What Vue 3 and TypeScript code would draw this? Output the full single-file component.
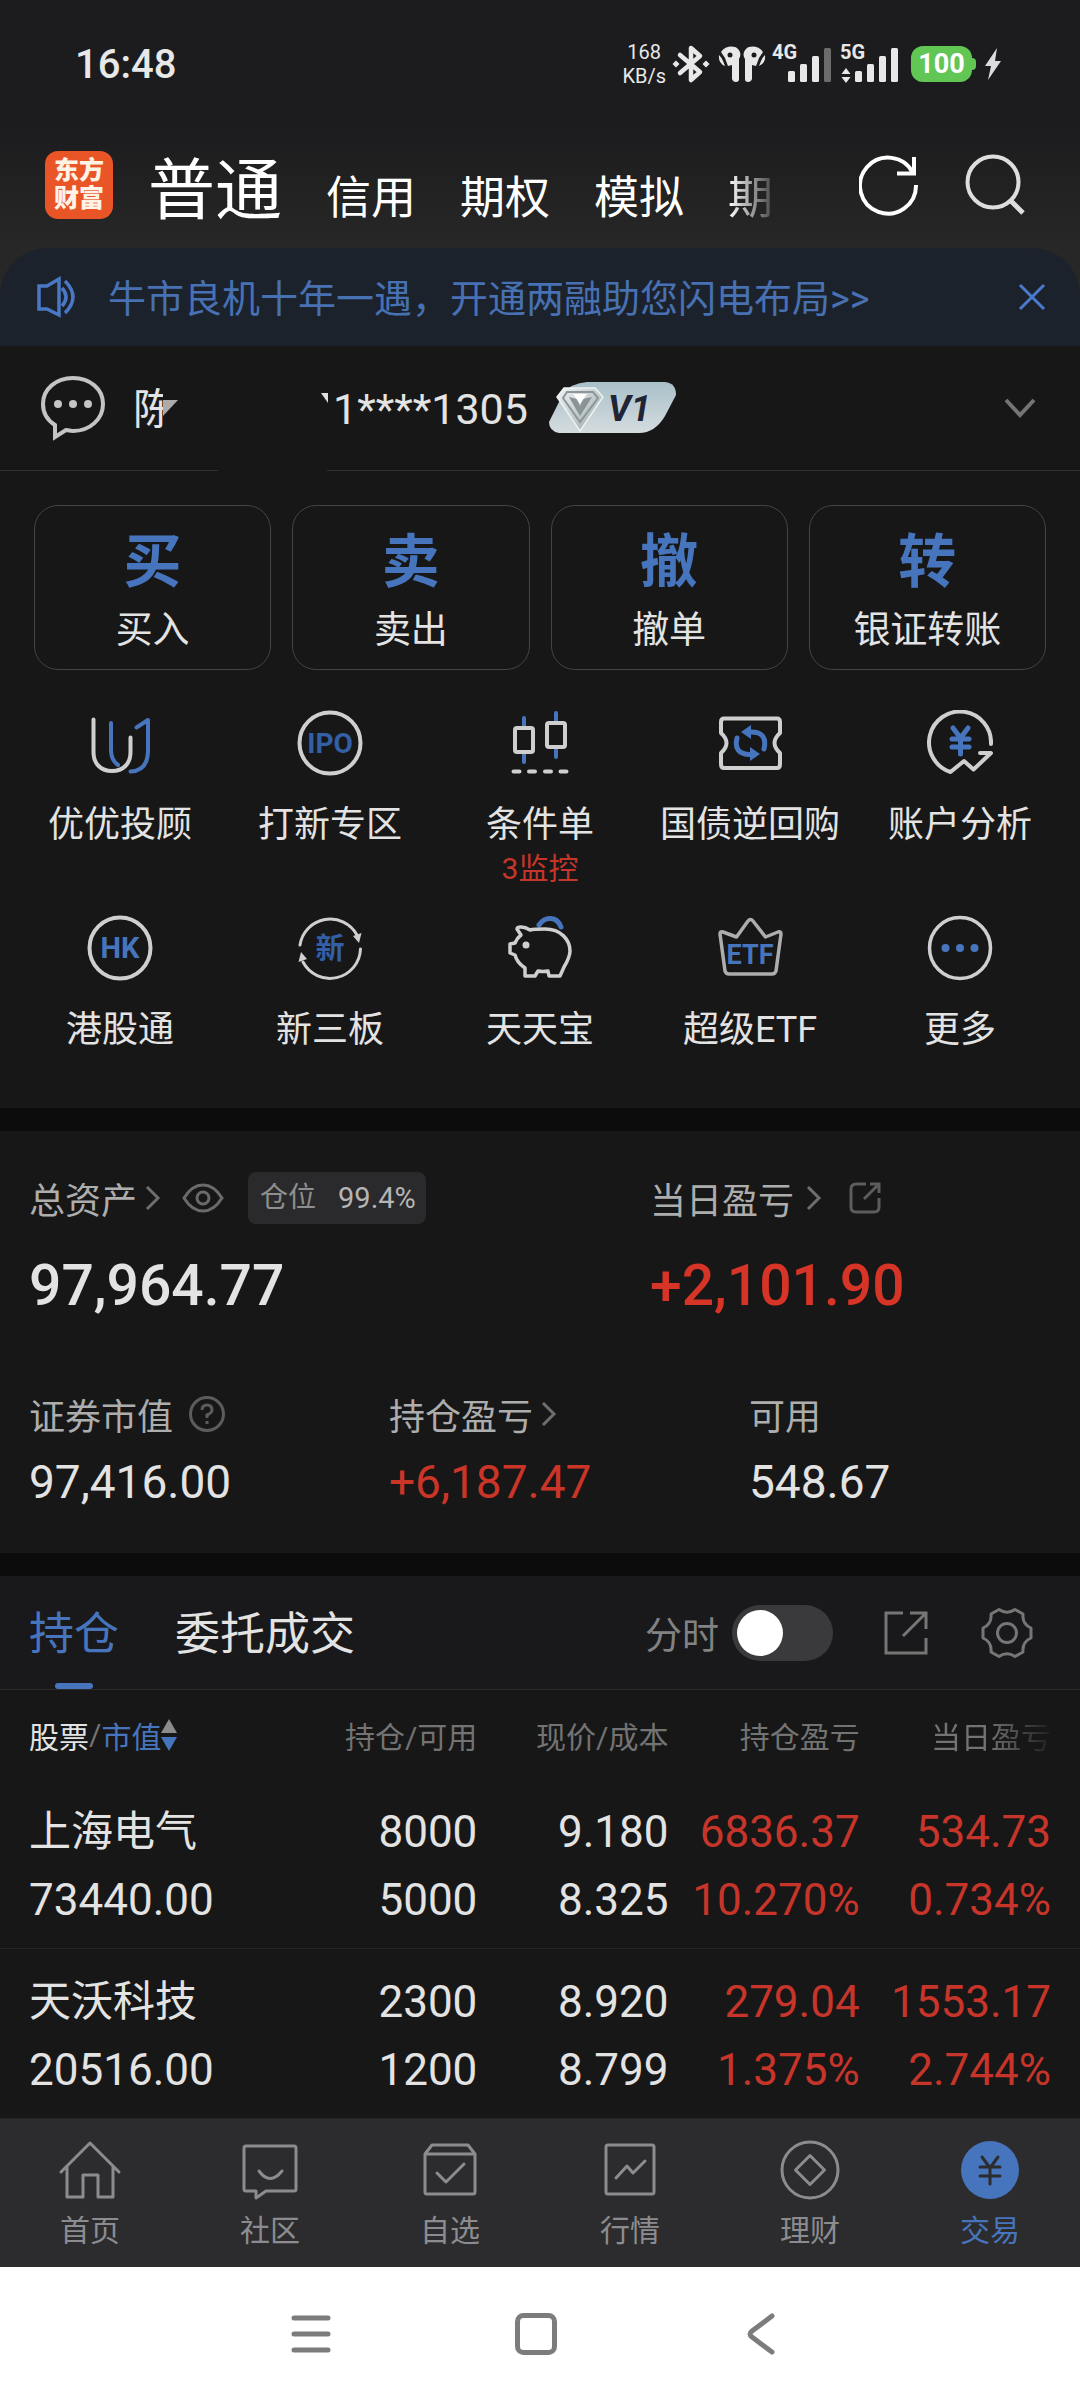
<script setup lang="ts">
import { ref } from 'vue'

interface Feature {
  icon: string
  label: string
  note?: string
}

interface Holding {
  name: string
  marketValue: string
  held: string
  available: string
  price: string
  cost: string
  profit: string
  profitRate: string
  dayProfit: string
  dayRate: string
}

const accountTypes = ['信用', '期权', '模拟']

const actions = [
  { mark: '买', label: '买入' },
  { mark: '卖', label: '卖出' },
  { mark: '撤', label: '撤单' },
  { mark: '转', label: '银证转账' },
]

const features: Feature[] = [
  { icon: 'advisor', label: '优优投顾' },
  { icon: 'ipo', label: '打新专区' },
  { icon: 'candles', label: '条件单', note: '3监控' },
  { icon: 'bond', label: '国债逆回购' },
  { icon: 'analysis', label: '账户分析' },
  { icon: 'hk', label: '港股通' },
  { icon: 'board', label: '新三板' },
  { icon: 'pig', label: '天天宝' },
  { icon: 'etf', label: '超级ETF' },
  { icon: 'more', label: '更多' },
]

const holdings: Holding[] = [
  {
    name: '上海电气',
    marketValue: '73440.00',
    held: '8000',
    available: '5000',
    price: '9.180',
    cost: '8.325',
    profit: '6836.37',
    profitRate: '10.270%',
    dayProfit: '534.73',
    dayRate: '0.734%',
  },
  {
    name: '天沃科技',
    marketValue: '20516.00',
    held: '2300',
    available: '1200',
    price: '8.920',
    cost: '8.799',
    profit: '279.04',
    profitRate: '1.375%',
    dayProfit: '1553.17',
    dayRate: '2.744%',
  },
]

const navItems = [
  { icon: 'home', label: '首页' },
  { icon: 'community', label: '社区' },
  { icon: 'watchlist', label: '自选' },
  { icon: 'market', label: '行情' },
  { icon: 'wealth', label: '理财' },
  { icon: 'trade', label: '交易' },
]

const activeNav = 'trade'
const showIntraday = ref(false)
const bannerOpen = ref(true)
</script>

<template>
  <div class="app">
    <header class="top">
      <div class="status">
        <span class="clock">16:48</span>
        <div class="status-icons">
          <span class="speed">168<br />KB/s</span>
          <svg class="bluetooth" width="38" height="42" viewBox="0 0 38 42" aria-hidden="true">
            <path d="M8 12 28 29 19 37V5L28 13 8 30" fill="none" stroke="#e8e8e8" stroke-width="4.5" stroke-linejoin="round" stroke-linecap="round" />
            <path d="M4 17.500 7.500 21 4 24.500.5 21ZM34 17.500 37.500 21 34 24.500 30.500 21Z" fill="#e8e8e8" />
          </svg>
          <svg class="earbuds" width="48" height="38" viewBox="0 0 48 38" aria-hidden="true">
            <g fill="#e8e8e8">
              <path d="M3 7C7 1 16 0 20 4 23 7 23 11 21 14V34Q21 37 18 37T14 34V20L10 21Q8 16 7 13 5 10 3 7Z" />
              <path d="M45 7C41 1 32 0 28 4 25 7 25 11 27 14V34Q27 37 30 37T34 34V20L38 21Q40 16 41 13 43 10 45 7Z" />
              <path d="M1 10Q0 18 7 21L5 16Q4 13 1 10ZM47 10Q48 18 41 21L43 16Q44 13 47 10Z" />
            </g>
            <circle cx="12" cy="10" r="2.500" fill="#1c1c1e" />
            <circle cx="36" cy="10" r="2.500" fill="#1c1c1e" />
          </svg>
          <svg class="signal" width="60" height="50" viewBox="0 -4 60 50" aria-hidden="true">
            <text x="0" y="16" class="net">4G</text>
            <g fill="#e8e8e8">
              <rect x="16" y="28" width="7" height="11" rx="1.500" />
              <rect x="28" y="21" width="7" height="18" rx="1.500" />
              <rect x="40" y="13" width="7" height="26" rx="1.500" />
            </g>
            <rect x="52" y="5" width="7" height="34" rx="1.500" fill="#6b6b6b" />
          </svg>
          <svg class="signal second" width="60" height="50" viewBox="0 -4 60 50" aria-hidden="true">
            <text x="0" y="16" class="net">5G</text>
            <path d="M1.500 31 6 25 10.500 31ZM1.500 34H10.500L6 40Z" fill="#e8e8e8" />
            <g fill="#e8e8e8">
              <rect x="15" y="28" width="7" height="11" rx="1.500" />
              <rect x="27" y="21" width="7" height="18" rx="1.500" />
              <rect x="39" y="13" width="7" height="26" rx="1.500" />
              <rect x="51" y="5" width="7" height="34" rx="1.500" />
            </g>
          </svg>
          <span class="battery">100</span>
          <svg class="bolt" width="18" height="34" viewBox="0 0 18 34" aria-hidden="true">
            <path d="M13 1 1 19H7L4 33 17 14H11Z" fill="#dcdcdc" />
          </svg>
        </div>
      </div>

      <div class="title-row">
        <span class="logo">东方<br />财富</span>
        <nav class="types" aria-label="账户类型">
          <button type="button" class="type current">普通</button>
          <button v-for="t in accountTypes" :key="t" type="button" class="type">{{ t }}</button>
          <button type="button" class="type faded">期货</button>
        </nav>
        <button type="button" class="icon-btn" aria-label="刷新">
          <svg width="60" height="64" viewBox="0 0 60 64" fill="none" stroke="#fff" stroke-width="4">
            <path d="M57 32A28 28 0 1 1 54 20" />
            <path d="M38 20.500H55V4" />
          </svg>
        </button>
        <button type="button" class="icon-btn" aria-label="搜索">
          <svg width="60" height="64" viewBox="0 0 60 64" fill="none" stroke="#dedede" stroke-width="4">
            <circle cx="28" cy="29" r="25.500" />
            <path d="M45 47 58 60" stroke-width="5" />
          </svg>
        </button>
      </div>
    </header>

    <div class="banner-wrap">
      <div v-if="bannerOpen" class="banner">
        <svg width="42" height="44" viewBox="0 0 42 44" fill="none" stroke="#4a78c4" stroke-width="3.500" aria-hidden="true">
          <path d="M3 11H11L23 4V40L11 34H3Z" />
          <path d="M26 13Q34 22 26 31M29 6Q45 22 29 38" />
        </svg>
        <a href="#" class="banner-text">牛市良机十年一遇，开通两融助您闪电布局&gt;&gt;</a>
        <button type="button" class="icon-btn" aria-label="关闭" @click="bannerOpen = false">
          <svg width="28" height="28" viewBox="0 0 28 28" fill="none" stroke="#4a7ace" stroke-width="3">
            <path d="M2 2 26 26M26 2 2 26" />
          </svg>
        </button>
      </div>
    </div>

    <section class="account">
      <svg width="64" height="66" viewBox="0 0 64 66" aria-hidden="true">
        <path d="M14 50C6 45 2 37 2 29 2 14 15 3 32 3S62 14 62 29 49 56 32 56C29 56 26 55 25 55L14 62Z" fill="none" stroke="#c4c4c4" stroke-width="4" />
        <g fill="#c4c4c4">
          <circle cx="17" cy="29" r="4" />
          <circle cx="32" cy="29" r="4" />
          <circle cx="47" cy="29" r="4" />
        </g>
      </svg>
      <div class="holder">
        <span class="surname">陈</span>
        <svg width="15" height="16" viewBox="0 0 15 16" aria-hidden="true"><path d="M0 0H15L0 16Z" fill="#ababab" /></svg>
      </div>
      <svg class="speck" width="8" height="10" viewBox="0 0 8 10" aria-hidden="true"><path d="M0 0H7V10Z" fill="#e0e0e0" /></svg>
      <span class="number">1****1305</span>
      <svg width="128" height="52" viewBox="0 0 128 52" role="img" aria-label="V1">
        <defs>
          <linearGradient id="badge" x1="0" y1="0" x2="0" y2="1">
            <stop offset="0" stop-color="#a9c0c9" />
            <stop offset="1" stop-color="#d5dcdf" />
          </linearGradient>
          <linearGradient id="gem" x1="0" y1="0" x2="1" y2="1">
            <stop offset="0" stop-color="#f1f4f4" />
            <stop offset="1" stop-color="#9aa6a8" />
          </linearGradient>
        </defs>
        <path d="M38 0H116Q127 1 127 13L116 34Q106 51 90 51H10Q0 49 0 40L14 12Q22 1 38 0Z" fill="url(#badge)" />
        <path d="M15 6H46L54 15 31 49 8 15Z" fill="url(#gem)" stroke="#eef2f2" stroke-width="1.500" />
        <path d="M18 10H44L49 16 31 40 14 16Z" fill="none" stroke="#8b979a" stroke-width="2" />
        <path d="M20 15 28 17 31 24 34 17 43 15 31 34Z" fill="#899497" />
        <path d="M24 12H38L31 22Z" fill="#fff" />
        <text x="59" y="39" class="level">V1</text>
      </svg>
      <button type="button" class="icon-btn expand" aria-label="展开账户">
        <svg width="32" height="22" viewBox="0 0 32 22" fill="none" stroke="#747474" stroke-width="4"><path d="M2 3 16 18 30 3" /></svg>
      </button>
    </section>
    <div class="divider"><i></i><i></i></div>

    <section class="actions">
      <button v-for="a in actions" :key="a.label" type="button" class="action">
        <span class="mark">{{ a.mark }}</span>
        <span class="action-label">{{ a.label }}</span>
      </button>
    </section>

    <section class="features">
      <a v-for="f in features" :key="f.label" href="#" class="feature">
        <svg width="66" height="66" viewBox="0 0 66 66" fill="none" stroke-width="4" stroke-linecap="round" stroke-linejoin="round" aria-hidden="true">
          <template v-if="f.icon === 'advisor'">
            <path class="b" d="M24 13V40Q24 50 31 55M49.500 17.500 61 10V40Q61 61 43.500 61.500" />
            <path class="w" d="M6.500 9.500V42C6.500 54 14 61 25 61S43.500 54 43.500 42V27.500" />
          </template>
          <template v-else-if="f.icon === 'ipo'">
            <circle class="w" cx="33" cy="33" r="30.500" />
            <text x="33" y="43" class="glyph" font-size="28">IPO</text>
          </template>
          <template v-else-if="f.icon === 'candles'">
            <path class="b" d="M17 8V17M17 43V52M49 3V12M49 38V47" />
            <rect class="w" x="8" y="18" width="18" height="24" rx="2" />
            <rect class="w" x="40" y="13" width="18" height="24" rx="2" />
            <path class="w" d="M6.500 61.500H12.500M22 61.500H28M38 61.500H44M53.500 61.500H59.500" />
          </template>
          <template v-else-if="f.icon === 'bond'">
            <path class="w" d="M7 8.500H60Q63 8.500 63 12V23Q52 33 63 43V54Q63 58 60 58H7Q4 58 4 54V43Q15 33 4 23V12Q4 8.500 7 8.500Z" />
            <path class="b" stroke-width="5" d="M20 28Q16 44 33 44.500M47 39Q51 22 34 22" />
            <path class="bf" d="M24 22 34 15V29ZM43 44 33 37V51Z" />
          </template>
          <template v-else-if="f.icon === 'analysis'">
            <path class="w" d="M64 34A31 31 0 1 0 23.500 62L37 51 46.500 59.500 64 43H53" />
            <path class="b" stroke-width="5" d="M26 18 33.500 28 41 18M33.500 28V44M25 29H42M25 37H42" />
          </template>
          <template v-else-if="f.icon === 'hk'">
            <circle class="w" cx="33" cy="33" r="30.500" />
            <text x="33" y="43" class="glyph light" font-size="29">HK</text>
          </template>
          <template v-else-if="f.icon === 'board'">
            <path class="w" stroke-width="3" d="M3 30A30.500 30.500 0 0 1 60 20M63.500 34A30.500 30.500 0 0 1 6 47" />
            <path class="wf" d="M4 37 1.500 47 10 44ZM62 28 64.500 18 56 21Z" />
            <text x="33" y="44" class="glyph" font-size="29">新</text>
          </template>
          <template v-else-if="f.icon === 'pig'">
            <path class="b" stroke-width="5" d="M32 10C38 1 50 1 54 12" />
            <path class="w" stroke-width="3.500" d="M14 20 10 14Q10 12 14 12C18 12 20 13 23 15 27 14 33 14 38 14 54 14 63 25 63 36 63 42 60 47 57 52L53 61H42L41 56Q36 57 31 56L28 61H18V53C12 49 9 44 8 40L3 38V29L8 28Q10 23 14 20Z" />
            <circle class="wf" cx="19" cy="30" r="3.500" />
          </template>
          <template v-else-if="f.icon === 'etf'">
            <path class="w dim" stroke-width="3.500" d="M3 19Q3 16 6 17L19.500 22 31 6Q33.500 3 36 6L48.500 22 61 17Q64 16 64 19L59 56Q58 59 55 59H12Q9 59 8 56Z" />
            <text x="33" y="49" class="glyph light" font-size="27">ETF</text>
          </template>
          <template v-else>
            <circle class="w" cx="33" cy="33" r="30.500" stroke-width="3.500" />
            <g class="bf">
              <circle cx="18.500" cy="33" r="4" />
              <circle cx="33" cy="33" r="4" />
              <circle cx="47.500" cy="33" r="4" />
            </g>
          </template>
        </svg>
        <span class="feature-label">{{ f.label }}</span>
        <span v-if="f.note" class="feature-note">{{ f.note }}</span>
      </a>
    </section>

    <section class="assets">
      <div class="row primary">
        <div class="cell">
          <div class="cap">
            <span>总资产</span>
            <svg class="chev" width="16" height="26" viewBox="0 0 16 26"><path d="M2 2 13 13 2 24" /></svg>
            <button type="button" class="icon-btn eye" aria-label="隐藏金额">
              <svg width="42" height="30" viewBox="0 0 42 30" fill="none" stroke="#6a6a6a" stroke-width="3">
                <path d="M2 15Q10 2 21 2T40 15Q32 28 21 28T2 15Z" />
                <circle cx="21" cy="15" r="6" />
              </svg>
            </button>
            <span class="tag"><span>仓位</span><b>99.4%</b></span>
          </div>
          <div class="big">97,964.77</div>
        </div>
        <div class="cell">
          <div class="cap">
            <span>当日盈亏</span>
            <svg class="chev day" width="16" height="26" viewBox="0 0 16 26"><path d="M2 2 13 13 2 24" /></svg>
            <button type="button" class="icon-btn share" aria-label="分享当日盈亏">
              <svg width="34" height="34" viewBox="0 0 34 34" fill="none" stroke="#5c5c5c" stroke-width="3">
                <path d="M18 3H8Q3 3 3 8V26Q3 31 8 31H26Q31 31 31 26V17M22 3H31V12M31 3 16 18" />
              </svg>
            </button>
          </div>
          <div class="big up">+2,101.90</div>
        </div>
      </div>
      <div class="row secondary">
        <div class="cell">
          <div class="cap">
            <span>证券市值</span>
            <button type="button" class="icon-btn help" aria-label="说明">
              <svg width="38" height="38" viewBox="0 0 38 38" fill="none" stroke="#5c5c5c" stroke-width="3">
                <circle cx="19" cy="19" r="16.500" />
                <path d="M14 15Q14 10 19 10T24 15Q24 18 19 20V23M19 26V29" />
              </svg>
            </button>
          </div>
          <div class="mid">97,416.00</div>
        </div>
        <div class="cell">
          <div class="cap">
            <span>持仓盈亏</span>
            <svg class="chev" width="16" height="26" viewBox="0 0 16 26"><path d="M2 2 13 13 2 24" /></svg>
          </div>
          <div class="mid up">+6,187.47</div>
        </div>
        <div class="cell">
          <div class="cap"><span>可用</span></div>
          <div class="mid">548.67</div>
        </div>
      </div>
    </section>

    <section class="positions">
      <div class="tabs">
        <button type="button" class="tab on">持仓</button>
        <button type="button" class="tab">委托成交</button>
        <label class="switch-label" for="intraday">分时</label>
        <input id="intraday" v-model="showIntraday" type="checkbox" class="switch" />
        <button type="button" class="icon-btn export" aria-label="导出">
          <svg width="46" height="46" viewBox="0 0 46 46" fill="none" stroke="#767676" stroke-width="3">
            <path d="M20 3H3V43H43V28M27 3H43V19M43 3 20 26" />
          </svg>
        </button>
        <button type="button" class="icon-btn" aria-label="设置">
          <svg width="52" height="52" viewBox="0 0 52 52" fill="none" stroke="#767676" stroke-width="3" stroke-linejoin="round">
            <path d="M18 2.500Q26 8 34 2.500L42 7Q41 17 50 21V31Q41 35 42 45L34 49.500Q26 44 18 49.500L10 45Q11 35 2 31V21Q11 17 10 7Z" />
            <circle cx="26" cy="26" r="9.500" />
          </svg>
        </button>
      </div>

      <table class="holdings">
        <colgroup>
          <col class="c-name" />
          <col class="c-num" />
          <col class="c-num" />
          <col class="c-num" />
          <col />
        </colgroup>
        <thead>
          <tr>
            <th scope="col">
              <button type="button" class="sort">
                <span class="lead">股票</span><span class="slash">/</span><span>市值</span>
                <svg width="16" height="32" viewBox="0 0 16 32" aria-hidden="true">
                  <path d="M8 0 16 14H0Z" fill="#8c8c8c" />
                  <path d="M8 32 16 18H0Z" fill="#4775bd" />
                </svg>
              </button>
            </th>
            <th scope="col">持仓/可用</th>
            <th scope="col">现价/成本</th>
            <th scope="col">持仓盈亏</th>
            <th scope="col" class="fade">当日盈亏</th>
          </tr>
        </thead>
        <tbody>
          <tr v-for="h in holdings" :key="h.name">
            <td><span class="stock">{{ h.name }}</span><span>{{ h.marketValue }}</span></td>
            <td><span>{{ h.held }}</span><span>{{ h.available }}</span></td>
            <td><span>{{ h.price }}</span><span>{{ h.cost }}</span></td>
            <td class="red"><span>{{ h.profit }}</span><span>{{ h.profitRate }}</span></td>
            <td class="red"><span>{{ h.dayProfit }}</span><span>{{ h.dayRate }}</span></td>
          </tr>
        </tbody>
      </table>
    </section>

    <nav class="bottom" aria-label="主导航">
      <a v-for="n in navItems" :key="n.icon" href="#" class="nav-item" :class="{ active: n.icon === activeNav }">
        <svg width="64" height="64" viewBox="0 0 64 64" fill="none" stroke="currentColor" stroke-width="3" stroke-linejoin="round" stroke-linecap="round" aria-hidden="true">
          <path v-if="n.icon === 'home'" d="M3 34 32 5 61 34M9 29V59H25V37H40V59H55V29" />
          <template v-else-if="n.icon === 'community'">
            <path d="M8 8H56Q58 8 58 10V51Q58 53 56 53H28L18 60V53H8Q6 53 6 51V10Q6 8 8 8Z" />
            <path d="M21 33Q32 48 44 33" />
          </template>
          <template v-else-if="n.icon === 'watchlist'">
            <path d="M7 16 14 7H50L57 16V54Q57 56 55 56H9Q7 56 7 54ZM7 16H57" />
            <path d="M19 35 28 44 46 26" />
          </template>
          <template v-else-if="n.icon === 'market'">
            <rect x="8" y="7" width="48" height="49" rx="2" />
            <path d="M18 40 29 28 35 35 47 23" />
          </template>
          <template v-else-if="n.icon === 'wealth'">
            <circle cx="32" cy="32" r="28" />
            <path d="M32 17.500 46.500 32 32 46.500 17.500 32Z" />
          </template>
          <template v-else>
            <circle cx="32" cy="32" r="29" fill="currentColor" stroke="none" />
            <path d="M24 19 32 30 40 19M32 30V46M22 29H42M22 38H42" stroke="#2c2c2e" />
          </template>
        </svg>
        <span>{{ n.label }}</span>
      </a>
    </nav>

    <nav class="system" aria-label="系统导航">
      <button type="button" class="icon-btn" aria-label="最近任务">
        <svg width="44" height="44" viewBox="0 0 44 44"><path d="M5 6H39M5 22H39M5 38H39" /></svg>
      </button>
      <button type="button" class="icon-btn" aria-label="主屏幕">
        <svg width="44" height="44" viewBox="0 0 44 44"><rect x="3.500" y="3.500" width="37" height="37" rx="6" /></svg>
      </button>
      <button type="button" class="icon-btn" aria-label="返回">
        <svg width="44" height="44" viewBox="0 0 44 44"><path d="M34 4 14 19Q10 22 14 25L34 40" /></svg>
      </button>
    </nav>
  </div>
</template>

<style>
body {
  margin: 0;
  background: #171717;
}
</style>

<style scoped>
.app {
  background: #171717;
  color: #e3e3e3;
  font-family: Roboto, 'Noto Sans CJK SC', sans-serif;
  font-size: 36px;
}

svg {
  display: block;
  flex: none;
}

button {
  padding: 0;
  border: 0;
  background: none;
  color: inherit;
  font: inherit;
}

a {
  color: inherit;
  text-decoration: none;
}

/* Header */
.top {
  background: linear-gradient(#1c1c1e 50%, #272727);
}

.status {
  display: flex;
  align-items: center;
  justify-content: space-between;
  height: 128px;
  padding: 0 78px 0 75px;
  box-sizing: border-box;
}

.clock {
  font-size: 40px;
  font-weight: 500;
  color: #e8e8e8;
}

.status-icons {
  display: flex;
  align-items: center;
}

.speed {
  font-size: 20px;
  line-height: 24px;
  text-align: center;
  color: #e8e8e8;
}

.bluetooth {
  margin-left: 6px;
}

.earbuds {
  margin-left: 8px;
}

.signal {
  margin-left: 6px;
}

.signal.second {
  margin-left: 8px;
}

.net {
  font-size: 20px;
  font-weight: 700;
  fill: #e8e8e8;
}

.battery {
  width: 61px;
  margin-left: 11px;
  border-radius: 12px;
  background: #62c655;
  color: #fff;
  font-size: 27px;
  font-weight: 700;
  line-height: 36px;
  text-align: center;
  position: relative;
}

.battery::after {
  content: '';
  position: absolute;
  left: 100%;
  top: 12px;
  width: 4px;
  height: 12px;
  border-radius: 0 4px 4px 0;
  background: #62c655;
}

.bolt {
  margin-left: 12px;
}

.title-row {
  display: flex;
  align-items: center;
  height: 120px;
  padding: 0 55px 7px 45px;
  box-sizing: border-box;
}

.logo {
  width: 68px;
  height: 68px;
  padding-top: 6px;
  box-sizing: border-box;
  border-radius: 13px;
  background: #e95527;
  color: #fff3e6;
  font-size: 25px;
  font-weight: 900;
  line-height: 28px;
  text-align: center;
}

.types {
  display: flex;
  flex: 1;
  align-items: baseline;
  gap: 44px;
  min-width: 0;
  margin-left: 35px;
  padding-top: 20px;
  overflow: hidden;
  color: #fff;
}

.type {
  flex: none;
  font-size: 45px;
  line-height: 80px;
}

.type.current {
  font-size: 67px;
}

.type.faded {
  -webkit-mask-image: linear-gradient(90deg, #000, rgba(0, 0, 0, 0.25) 45%, transparent 55%);
  mask-image: linear-gradient(90deg, #000, rgba(0, 0, 0, 0.25) 45%, transparent 55%);
}

.icon-btn {
  display: block;
  flex: none;
}

.title-row .icon-btn + .icon-btn {
  margin-left: 46px;
}

/* Banner */
.banner-wrap {
  background: #272727;
}

.banner {
  display: flex;
  align-items: center;
  height: 98px;
  padding: 0 34px 0 36px;
  border-radius: 48px 48px 0 0;
  background: #1c222b;
}

.banner-text {
  flex: 1;
  margin-left: 30px;
  padding-bottom: 4px;
  color: #4771b3;
  font-size: 38px;
}

/* Account */
.account {
  display: flex;
  align-items: center;
  height: 124px;
  padding: 0 44px 0 41px;
}

.holder {
  display: flex;
  align-items: center;
  margin-left: 28px;
}

.surname {
  width: 30px;
  overflow: hidden;
  font-size: 42px;
  line-height: 60px;
  padding-top: 4px;
  white-space: nowrap;
}

.speck {
  margin: 0 4px 20px 143px;
}

.number {
  margin-right: 21px;
  padding-top: 2px;
  font-size: 43px;
}

.level {
  font-size: 36px;
  font-style: italic;
  font-weight: 700;
  fill: #1f2535;
}

.expand {
  margin-left: auto;
}

.divider {
  display: flex;
  justify-content: space-between;
  height: 1px;
}

.divider i {
  width: 218px;
  background: #303030;
}

.divider i + i {
  width: calc(100% - 327px);
}

/* Trade actions */
.actions {
  display: grid;
  grid-template-columns: repeat(4, 1fr);
  gap: 21px;
  padding: 34px 34px 0;
}

.action {
  display: flex;
  flex-direction: column;
  align-items: center;
  height: 165px;
  padding-top: 20px;
  border: 1px solid #444;
  border-radius: 24px;
}

.mark {
  color: #4775bd;
  font-size: 58px;
  font-weight: 700;
  line-height: 72px;
}

.action-label {
  font-size: 37px;
  line-height: 66px;
}

/* Feature shortcuts */
.features {
  display: grid;
  grid-template-columns: repeat(5, 1fr);
  row-gap: 28px;
  padding: 40px 15px 53px;
}

.feature {
  display: flex;
  flex-direction: column;
  align-items: center;
}

.feature-label {
  margin-top: 24px;
  line-height: 50px;
  white-space: nowrap;
}

.feature-note {
  margin-top: 1px;
  color: #c5352a;
  font-size: 30px;
  line-height: 36px;
}

.w {
  stroke: #cfcfcf;
}

.w.dim {
  stroke: #adadad;
}

.b {
  stroke: #4775bd;
}

.wf {
  fill: #cfcfcf;
}

.bf {
  fill: #4775bd;
}

.glyph {
  fill: #325fa5;
  font-weight: 700;
  text-anchor: middle;
}

.glyph.light {
  fill: #4775bd;
}

/* Assets */
.assets {
  padding: 42px 0 43px;
  border-top: 23px solid #0c0c0c;
}

.row {
  display: grid;
}

.primary {
  grid-template-columns: 23fr 17fr;
}

.secondary {
  grid-template-columns: repeat(3, 1fr);
  margin-top: 70px;
}

.cell {
  padding-left: 29px;
}

.cap {
  display: flex;
  align-items: center;
  height: 50px;
  color: #adadad;
}

.chev {
  margin-left: 8px;
  fill: none;
  stroke: #6e6e6e;
  stroke-width: 3;
}

.chev.day {
  margin-left: 12px;
}

.eye {
  margin-left: 21px;
}

.share {
  margin-left: 26px;
}

.help {
  margin-left: 15px;
}

.tag {
  display: flex;
  gap: 22px;
  margin-left: 24px;
  padding: 0 10px 0 12px;
  border-radius: 8px;
  background: #2a2a2c;
  color: #8e8e8e;
  font-size: 28px;
  line-height: 52px;
}

.tag b {
  color: #b5b5b5;
  font-size: 29px;
  font-weight: 400;
}

.big {
  margin-top: 30px;
  font-size: 57px;
  font-weight: 500;
  line-height: 66px;
}

.big.up {
  color: #d63426;
}

.mid {
  margin-top: 15px;
  font-size: 46px;
  line-height: 56px;
}

.mid.up {
  color: #ca3528;
}

/* Positions */
.positions {
  border-top: 23px solid #0c0c0c;
}

.tabs {
  display: flex;
  align-items: center;
  height: 113px;
  padding: 0 47px 0 29px;
  border-bottom: 1px solid #2a2a2a;
  background: #19191b;
}

.tab {
  position: relative;
  padding-top: 4px;
  font-size: 45px;
  line-height: 109px;
}

.tab + .tab {
  margin-left: 56px;
}

.tab.on {
  color: #4775bd;
}

.tab.on::after {
  content: '';
  position: absolute;
  left: 50%;
  bottom: 0;
  width: 38px;
  height: 6px;
  margin-left: -19px;
  border-radius: 3px;
  background: #4775bd;
}

.switch-label {
  margin-left: auto;
  color: #828282;
  font-size: 37px;
}

.switch {
  appearance: none;
  flex: none;
  width: 101px;
  height: 56px;
  margin: 0 0 0 13px;
  padding: 5px;
  box-sizing: border-box;
  border-radius: 28px;
  background: #3a3a3c;
}

.switch::before {
  content: '';
  display: block;
  width: 46px;
  height: 46px;
  border-radius: 50%;
  background: #fff;
}

.switch:checked::before {
  margin-left: auto;
}

.export {
  margin: 0 52px 0 50px;
}

.holdings {
  width: 100%;
  table-layout: fixed;
  border-collapse: separate;
  border-spacing: 0;
}

.c-name {
  width: 26.5%;
}

.c-num {
  width: 17.7%;
}

.holdings th {
  height: 89px;
  padding: 0;
  color: #737373;
  font-size: 30px;
  font-weight: 400;
  text-align: right;
  white-space: nowrap;
}

.holdings th:first-child,
.holdings td:first-child {
  padding-left: 29px;
  text-align: left;
}

.holdings th:last-child,
.holdings td:last-child {
  padding-right: 29px;
}

.holdings .fade {
  -webkit-mask-image: linear-gradient(90deg, #000 58%, transparent 90%);
  mask-image: linear-gradient(90deg, #000 58%, transparent 90%);
}

.sort {
  display: flex;
  align-items: center;
  color: #4775bd;
}

.sort .lead {
  color: #e3e3e3;
}

.sort .slash {
  color: #737373;
}

.holdings td {
  padding: 19px 0 14px;
  border-bottom: 1px solid #262626;
  font-size: 44px;
  line-height: 68px;
  text-align: right;
}

.holdings td span {
  display: block;
}

.holdings td .stock {
  font-size: 42px;
}

.holdings td.red {
  color: #c7352a;
}

/* Bottom navigation */
.bottom {
  display: grid;
  grid-template-columns: repeat(6, 1fr);
  background: #2c2c2e;
}

.nav-item {
  display: flex;
  flex-direction: column;
  align-items: center;
  height: 148px;
  padding-top: 19px;
  box-sizing: border-box;
  color: #8c8c90;
  font-size: 30px;
}

.nav-item span {
  line-height: 58px;
}

.nav-item.active {
  color: #4775bd;
}

.system {
  display: grid;
  grid-template-columns: repeat(3, 21%);
  align-items: center;
  justify-content: center;
  justify-items: center;
  height: 133px;
  padding-right: 9px;
  background: #fff;
}

.system svg {
  fill: none;
  stroke: #7c7c7c;
  stroke-width: 5;
  stroke-linecap: round;
}
</style>
